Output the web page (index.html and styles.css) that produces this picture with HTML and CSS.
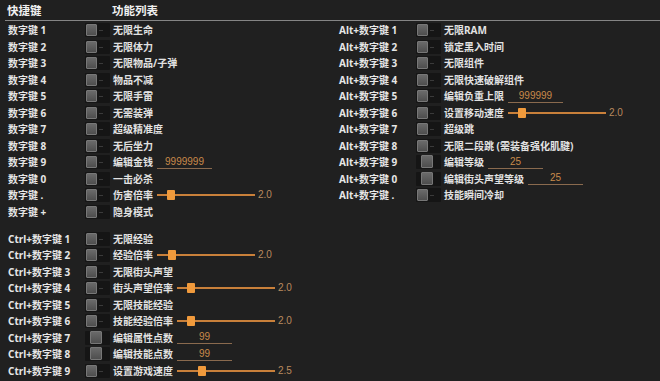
FILE: index.html
```html
<!DOCTYPE html>
<html lang="zh-CN">
<head>
    <meta charset="UTF-8">
    <title>快捷键</title>
    <link rel="stylesheet" href="styles.css">
</head>
<body>
    <div class="header">
        <span class="head-key">快捷键</span>
        <span class="head-func">功能列表</span>
    </div>

    <div class="columns">
        <div class="column left">
            <div class="group">
                <div class="row"><span class="key">数字键 1</span><span class="toggle"></span><span class="name">无限生命</span></div>
                <div class="row"><span class="key">数字键 2</span><span class="toggle"></span><span class="name">无限体力</span></div>
                <div class="row"><span class="key">数字键 3</span><span class="toggle"></span><span class="name">无限物品/子弹</span></div>
                <div class="row"><span class="key">数字键 4</span><span class="toggle"></span><span class="name">物品不减</span></div>
                <div class="row"><span class="key">数字键 5</span><span class="toggle"></span><span class="name">无限手雷</span></div>
                <div class="row"><span class="key">数字键 6</span><span class="toggle"></span><span class="name">无需装弹</span></div>
                <div class="row"><span class="key">数字键 7</span><span class="toggle"></span><span class="name">超级精准度</span></div>
                <div class="row"><span class="key">数字键 8</span><span class="toggle"></span><span class="name">无后坐力</span></div>
                <div class="row"><span class="key">数字键 9</span><span class="toggle"></span><span class="name">编辑金钱</span><span class="field">9999999</span></div>
                <div class="row"><span class="key">数字键 0</span><span class="toggle"></span><span class="name">一击必杀</span></div>
                <div class="row"><span class="key">数字键 .</span><span class="toggle"></span><span class="name">伤害倍率</span><span class="slider"><span class="thumb" style="left: 10px"></span></span><span class="value">2.0</span></div>
                <div class="row"><span class="key">数字键 +</span><span class="toggle"></span><span class="name">隐身模式</span></div>
            </div>

            <div class="group">
                <div class="row"><span class="key">Ctrl+数字键 1</span><span class="toggle"></span><span class="name">无限经验</span></div>
                <div class="row"><span class="key">Ctrl+数字键 2</span><span class="toggle"></span><span class="name">经验倍率</span><span class="slider"><span class="thumb" style="left: 11px"></span></span><span class="value">2.0</span></div>
                <div class="row"><span class="key">Ctrl+数字键 3</span><span class="toggle"></span><span class="name">无限街头声望</span></div>
                <div class="row"><span class="key">Ctrl+数字键 4</span><span class="toggle"></span><span class="name">街头声望倍率</span><span class="slider"><span class="thumb" style="left: 10px"></span></span><span class="value">2.0</span></div>
                <div class="row"><span class="key">Ctrl+数字键 5</span><span class="toggle"></span><span class="name">无限技能经验</span></div>
                <div class="row"><span class="key">Ctrl+数字键 6</span><span class="toggle"></span><span class="name">技能经验倍率</span><span class="slider"><span class="thumb" style="left: 10px"></span></span><span class="value">2.0</span></div>
                <div class="row"><span class="key">Ctrl+数字键 7</span><span class="toggle shifted"></span><span class="name">编辑属性点数</span><span class="field">99</span></div>
                <div class="row"><span class="key">Ctrl+数字键 8</span><span class="toggle shifted"></span><span class="name">编辑技能点数</span><span class="field">99</span></div>
                <div class="row"><span class="key">Ctrl+数字键 9</span><span class="toggle"></span><span class="name">设置游戏速度</span><span class="slider"><span class="thumb" style="left: 21px"></span></span><span class="value">2.5</span></div>
            </div>
        </div>

        <div class="column right">
            <div class="group">
                <div class="row"><span class="key">Alt+数字键 1</span><span class="toggle"></span><span class="name">无限RAM</span></div>
                <div class="row"><span class="key">Alt+数字键 2</span><span class="toggle"></span><span class="name">锁定黑入时间</span></div>
                <div class="row"><span class="key">Alt+数字键 3</span><span class="toggle"></span><span class="name">无限组件</span></div>
                <div class="row"><span class="key">Alt+数字键 4</span><span class="toggle"></span><span class="name">无限快速破解组件</span></div>
                <div class="row"><span class="key">Alt+数字键 5</span><span class="toggle"></span><span class="name">编辑负重上限</span><span class="field">999999</span></div>
                <div class="row"><span class="key">Alt+数字键 6</span><span class="toggle"></span><span class="name">设置移动速度</span><span class="slider"><span class="thumb" style="left: 10px"></span></span><span class="value">2.0</span></div>
                <div class="row"><span class="key">Alt+数字键 7</span><span class="toggle"></span><span class="name">超级跳</span></div>
                <div class="row"><span class="key">Alt+数字键 8</span><span class="toggle"></span><span class="name">无限二段跳 (需装备强化肌腱)</span></div>
                <div class="row"><span class="key">Alt+数字键 9</span><span class="toggle shifted"></span><span class="name">编辑等级</span><span class="field">25</span></div>
                <div class="row"><span class="key">Alt+数字键 0</span><span class="toggle shifted"></span><span class="name">编辑街头声望等级</span><span class="field">25</span></div>
                <div class="row"><span class="key">Alt+数字键 .</span><span class="toggle"></span><span class="name">技能瞬间冷却</span></div>
            </div>
        </div>
    </div>
</body>
</html>
```

FILE: styles.css
```css
body {
    margin: 0;
    width: 660px;
    height: 381px;
    overflow: hidden;
    background-color: #202020;
    color: #e2e2e2;
    font-family: "Noto Sans", "Noto Sans CJK SC", sans-serif;
    font-size: 10px;
    font-weight: bold;
}

.header {
    display: flex;
    align-items: center;
    height: 20px;
    margin-left: 5px;
    border-bottom: 1px solid #858585;
    font-size: 11.5px;
    color: #f0f0f0;
}

.head-key {
    width: 105px;
    padding-left: 2px;
}

.columns {
    display: grid;
    grid-template-columns: 330px 1fr;
    padding-top: 1px;
}

.column.left {
    padding-left: 8px;
}

.column.right {
    padding-left: 9px;
}

.group {
    display: flex;
    flex-direction: column;
}

.group + .group {
    margin-top: 10.5px;
}

.row {
    display: flex;
    align-items: center;
    height: 16.5px;
    line-height: 16.5px;
    white-space: nowrap;
}

.key {
    width: 77px;
    color: #e6e6e6;
}

.toggle {
    position: relative;
    width: 25px;
    height: 14px;
    margin-right: 3px;
    background-color: #151515;
    border-radius: 1px;
}

.toggle::before {
    content: "";
    position: absolute;
    left: 1px;
    top: 1px;
    width: 9px;
    height: 10px;
    background: linear-gradient(#6a6a6a, #4e4e4e);
    border: 1px solid #777;
    border-radius: 1px;
}

.toggle::after {
    content: "";
    position: absolute;
    left: 14px;
    top: 7px;
    width: 4px;
    height: 1px;
    background-color: #3a3a3a;
}

.toggle.shifted::before {
    left: 5px;
    width: 10px;
    height: 11px;
    top: 0;
}

.toggle.shifted::after {
    display: none;
}

.name {
    margin-right: 4px;
}

.field {
    width: 55px;
    height: 12px;
    line-height: 12px;
    text-align: center;
    border-bottom: 1px solid #8a6a4e;
    color: #c98a4a;
    font-weight: normal;
    font-family: "Liberation Sans", sans-serif;
    font-size: 10px;
}

.slider {
    position: relative;
    width: 98px;
    height: 2px;
    background-color: #c9803a;
}

.thumb {
    position: absolute;
    top: -4px;
    width: 8px;
    height: 10px;
    background-color: #f09a3c;
    border-radius: 1px;
}

.value {
    margin-left: 3px;
    color: #b98a5e;
    font-weight: normal;
    font-family: "Liberation Sans", sans-serif;
    font-size: 10px;
}
```
